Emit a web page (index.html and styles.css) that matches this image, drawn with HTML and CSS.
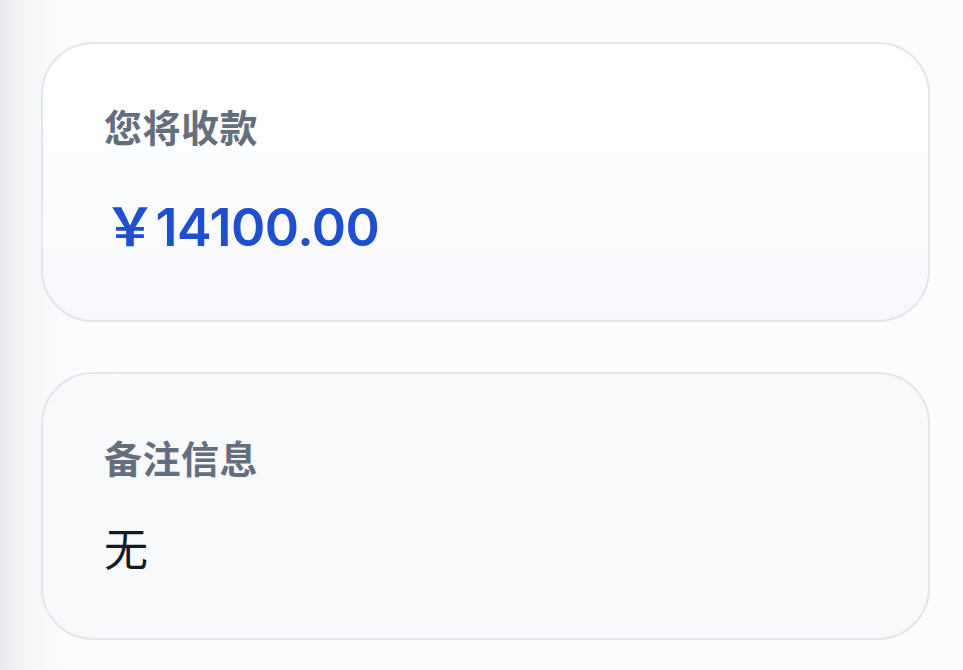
FILE: index.html
```html
<!DOCTYPE html>
<html lang="zh-CN">
<head>
<meta charset="utf-8">
<link rel="stylesheet" href="styles.css">
</head>
<body>
<main class="page">
  <section class="card card-amount">
    <div class="label">您将收款</div>
    <div class="amount"><span class="yen">￥</span>14100.00</div>
  </section>
  <section class="card card-note">
    <div class="label">备注信息</div>
    <div class="note">无</div>
  </section>
</main>
</body>
</html>
```

FILE: styles.css
```css
* { box-sizing: border-box; }
html, body { margin: 0; padding: 0; }
body {
  width: 963px;
  height: 670px;
  overflow: hidden;
  background: linear-gradient(to right, #e8eaed 0, #f3f4f6 20px, #fafbfc 60px, #fcfcfd 120px);
  font-family: "Noto Sans CJK SC", "Noto Sans", sans-serif;
}
.page {
  display: flex;
  flex-direction: column;
  gap: 50px;
  padding: 42px 33px 0 41px;
}
.card {
  border: 2px solid #e3e6ea;
  border-radius: 52px;
  padding: 0 61px;
  display: flex;
  flex-direction: column;
}
.card-amount {
  height: 280px;
  padding-top: 57px;
  background: linear-gradient(to bottom, #ffffff 0%, #fbfcfe 50%, #f6f8fb 100%);
}
.card-note {
  height: 268px;
  padding-top: 58px;
  background: #f8f9fb;
}
.label {
  font-size: 38px;
  line-height: 50px;
  font-weight: 700;
  color: #646f7d;
  letter-spacing: 0.5px;
}
.amount {
  margin-top: 43px;
  font-family: "Inter", "Noto Sans CJK SC", sans-serif;
  font-size: 52px;
  line-height: 60px;
  font-weight: 600;
  color: #1f4fcf;
  letter-spacing: -0.5px;
}
.yen {
  font-family: "Noto Sans CJK SC", sans-serif;
  font-weight: 700;
}
.note {
  margin-top: 35px;
  font-size: 44px;
  line-height: 60px;
  color: #141a24;
}
```
